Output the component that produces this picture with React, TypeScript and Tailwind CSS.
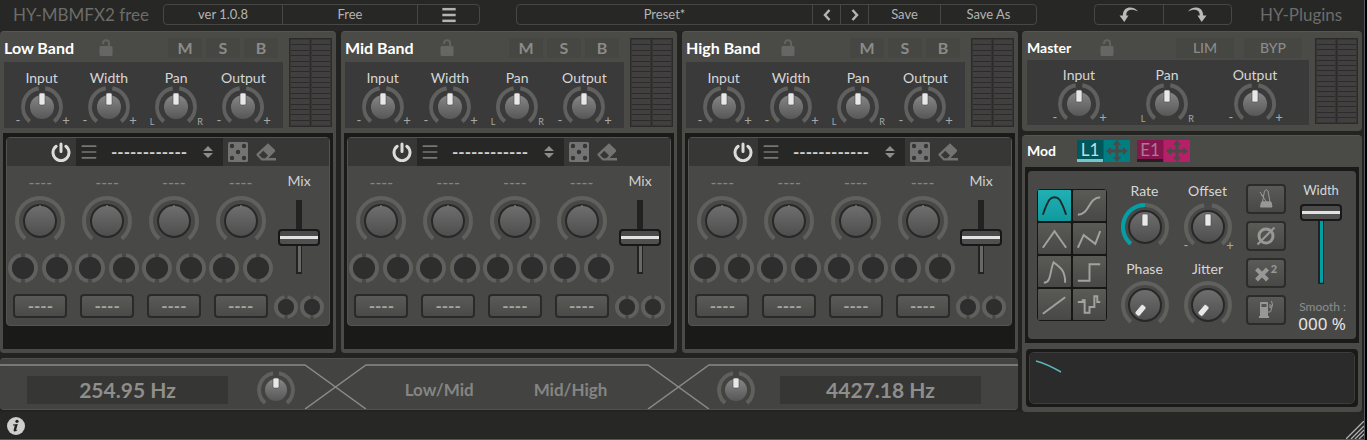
import React, { useState } from 'react';
import { Menu } from 'lucide-react';

type Variant = 'trim' | 'macro' | 'mod' | 'cross';

// radius of the ring, radius of the cap, pointer length
const KNOBS: Record<Variant, { size: number; ring: number; cap: number; pointer: number; top: number }> = {
  trim: { size: 42, ring: 19, cap: 12, pointer: 12, top: 14 },
  macro: { size: 50, ring: 23, cap: 16, pointer: 0, top: 0 },
  mod: { size: 48, ring: 22, cap: 16, pointer: 12, top: 13 },
  cross: { size: 36, ring: 17, cap: 11, pointer: 10, top: 12 },
};

const SWEEP = 140;

const point = (r: number, deg: number) => {
  const a = ((deg - 90) * Math.PI) / 180;
  return `${(r * Math.cos(a)).toFixed(2)} ${(r * Math.sin(a)).toFixed(2)}`;
};

const arc = (r: number, from: number, to: number) =>
  `M${point(r, from)}A${r} ${r} 0 ${to - from > 180 ? 1 : 0} 1 ${point(r, to)}`;

interface KnobProps {
  name: string;
  variant: Variant;
  start?: number;
  split?: boolean;
  lit?: boolean;
  marks?: [string, string];
}

const Knob: React.FC<KnobProps> = ({ name, variant, start = 50, split = false, lit = false, marks }) => {
  const [value, setValue] = useState(start);
  const { size, ring, cap, pointer, top } = KNOBS[variant];
  const half = size / 2;
  const angle = (value / 100) * SWEEP * 2 - SWEEP;
  const outlined = variant === 'macro' || variant === 'mod';
  const markX = variant === 'mod' ? 22 : 24;
  const markY = variant === 'mod' ? 23 : 18;

  return (
    <span className="relative block">
      <svg width={size} height={size} viewBox={`${-half} ${-half} ${size} ${size}`} className="block overflow-visible">
        <defs>
          <linearGradient id="cap" x1="0" y1="0" x2="0" y2="1">
            <stop offset="0" stopColor="#868686" />
            <stop offset="1" stopColor="#575757" />
          </linearGradient>
          <linearGradient id="capDim" x1="0" y1="0" x2="0" y2="1">
            <stop offset="0" stopColor="#6f6f6f" />
            <stop offset="1" stopColor="#4d4d4d" />
          </linearGradient>
        </defs>
        <g fill="none" stroke="#60605e" strokeWidth="4">
          {split ? (
            <>
              <path d={arc(ring, -SWEEP, -10)} />
              <path d={arc(ring, 10, SWEEP)} />
            </>
          ) : (
            <path d={arc(ring, -SWEEP, SWEEP)} />
          )}
          {lit && value > 0 && <path d={arc(ring, -SWEEP, angle)} stroke="#00a0a6" />}
        </g>
        <circle
          r={cap}
          fill={outlined ? 'url(#capDim)' : 'url(#cap)'}
          stroke={outlined ? '#282828' : 'none'}
          strokeWidth="2"
        />
        {pointer > 0 ? (
          <rect
            x="-3"
            y={-top}
            width="6"
            height={pointer}
            rx="1.5"
            fill="#e8e8e8"
            stroke="#4a4a4a"
            strokeWidth="0.6"
            transform={`rotate(${angle})`}
          />
        ) : (
          <path d="M0-16v2" stroke="#777" strokeWidth="1.5" />
        )}
        {marks && (
          <g fill="#a8a8a8" fontSize={marks[0] === 'L' ? 9 : 13} textAnchor="middle">
            <text x={-markX} y={markY}>{marks[0]}</text>
            <text x={markX} y={markY}>{marks[1]}</text>
          </g>
        )}
      </svg>
      <input
        type="range"
        aria-label={name}
        value={value}
        onChange={(e) => setValue(Number(e.target.value))}
        className="absolute inset-0 w-full h-full opacity-0 cursor-pointer"
      />
    </span>
  );
};

// Empty parameter slot
const Slot: React.FC<{ r: number }> = ({ r }) => (
  <svg width={r * 2} height={r * 2} viewBox={`${-r} ${-r} ${r * 2} ${r * 2}`} className="block" aria-hidden="true">
    <g fill="none" stroke="#60605e" strokeWidth="4">
      <path d={arc(r - 2, 9, 171)} />
      <path d={arc(r - 2, 189, 351)} />
    </g>
    <circle r={r - 4} fill="#2e2e2e" />
  </svg>
);

const Meter: React.FC = () => (
  <div className="grid grid-cols-2 gap-px w-[43px] shrink-0 p-px bg-[#2b2b2a]">
    {[0, 1].map((ch) => (
      <div key={ch} className="flex flex-col gap-px border border-[#363634]">
        {Array.from({ length: 16 }, (_, i) => (
          <span key={i} className="flex-1 bg-[#413f3f]" />
        ))}
      </div>
    ))}
  </div>
);

const LockIcon: React.FC = () => (
  <svg width="14" height="18" viewBox="0 0 14 18" className="block">
    <rect x="0.5" y="7" width="13" height="10" rx="1.5" fill="#666665" />
    <path d="M10 8V4.500a3 3 0 0 0-6-.5v1" fill="none" stroke="#626261" strokeWidth="2" />
  </svg>
);

const PowerIcon: React.FC = () => (
  <svg width="20" height="20" viewBox="0 0 20 20" fill="none" stroke="#dcdcdc" strokeWidth="3" strokeLinecap="round">
    <path d="M10 2v7.500M5.200 4.300a8 8 0 1 0 9.600 0" />
  </svg>
);

const DiceIcon: React.FC = () => (
  <svg width="20" height="20" viewBox="0 0 20 20">
    <rect width="20" height="20" rx="1.5" fill="#737373" />
    <g fill="#353534">
      <circle cx="4" cy="4" r="2.200" />
      <circle cx="16" cy="4" r="2.200" />
      <circle cx="10" cy="10" r="2.200" />
      <circle cx="4" cy="16" r="2.200" />
      <circle cx="16" cy="16" r="2.200" />
    </g>
  </svg>
);

const EraserIcon: React.FC = () => (
  <svg width="20" height="20" viewBox="0 0 20 20">
    <path
      fill="#737373"
      fillRule="evenodd"
      d="M12 1.200 18.800 7.800Q19.600 8.800 18.800 9.800L12.500 16H20V18.500H5.500L.700 13.500Q0 12.500.700 11.700ZM7.300 8.800 3 13l3.300 3.300H9.300L12 13.500Z"
    />
  </svg>
);

const UndoIcon: React.FC = () => (
  <svg width="20" height="16" viewBox="0 0 20 16">
    <path fill="#bababa" d="M19 4.500C15-1 4-1.500 3.800 8.500H.5L5.300 15 9.500 8.500H7.300C7 2.500 13 1.500 19 4.500Z" />
  </svg>
);

const RANGE =
  'appearance-none w-[42px] bg-no-repeat bg-center cursor-pointer [writing-mode:vertical-lr] [direction:rtl] [&::-webkit-slider-runnable-track]:w-[42px] [&::-webkit-slider-thumb]:appearance-none [&::-webkit-slider-thumb]:w-[42px] [&::-webkit-slider-thumb]:h-[17px] [&::-webkit-slider-thumb]:rounded-[4px] [&::-webkit-slider-thumb]:border-2 [&::-webkit-slider-thumb]:border-solid [&::-webkit-slider-thumb]:border-[#181818] [&::-webkit-slider-thumb]:bg-[linear-gradient(#4a4a4a_0_40%,#e2e2e2_40%_63%,#505050_63%_100%)]';

const BAND_KNOBS = ['Input', 'Width', 'Pan', 'Output'];

const TrimKnob: React.FC<{ band: string; name: string }> = ({ band, name }) => (
  <div className="flex flex-col items-center">
    <span className="text-sm leading-4 text-[#d6d6d6]">{name}</span>
    <Knob name={`${band} ${name}`} variant="trim" split marks={name === 'Pan' ? ['L', 'R'] : ['-', '+']} />
  </div>
);

const Band: React.FC<{ title: string }> = ({ title }) => (
  <section className="flex flex-col gap-[6px] px-[3px] pt-[6px] pb-1 rounded bg-[#4a4a46] border-t border-[#555552]">
    <div className="flex justify-between gap-[6px] px-px">
      <div className="flex-1 h-[89px] flex flex-col">
        <div className="flex items-center h-6 pb-1">
          <h2 className="w-[95px] text-base leading-5 font-bold text-white">{title}</h2>
          <button aria-label={`Unlock ${title}`}><LockIcon /></button>
          <div className="flex gap-1 ml-auto mr-[5px]">
            {['M', 'S', 'B'].map((key) => (
              <button key={key} className="w-[34px] h-5 text-base leading-5 font-bold text-[#8b8b89] bg-[#464643]">
                {key}
              </button>
            ))}
          </div>
        </div>
        <div className="flex-1 grid grid-cols-4 pl-1 pr-[6px] pt-2 bg-[#3a3a3a]">
          {BAND_KNOBS.map((name) => (
            <TrimKnob key={name} band={title} name={name} />
          ))}
        </div>
      </div>
      <Meter />
    </div>

    <div className="px-[3px] pt-1 pb-[23px] bg-[#1a1a18]">
      <div className="rounded-sm border border-[#545452] bg-[#484846]">
        <div className="flex items-center h-7 bg-[#373736]">
          <button className="w-[69px] flex justify-end pr-[5px]" aria-label={`${title} effect power`}>
            <PowerIcon />
          </button>
          <div className="flex items-center h-full w-[147px] pl-[3px] pr-[10px] bg-[#272726]">
            <button aria-label={`${title} effect menu`}>
              <Menu size={20} color="#777" strokeWidth={2} />
            </button>
            <select
              aria-label={`${title} effect`}
              className="appearance-none flex-1 min-w-0 h-full pl-3 text-[17px] font-bold text-[#d0d0d0] bg-transparent outline-none"
            >
              <option>------------</option>
            </select>
            <svg width="10" height="12" viewBox="0 0 10 12" fill="#8c8c8c" aria-hidden="true">
              <path d="M5 0l5 5H0zM5 12l5-5H0z" />
            </svg>
          </div>
          <div className="flex gap-2 pl-[5px]">
            <button aria-label={`Randomize ${title}`}><DiceIcon /></button>
            <button aria-label={`Clear ${title}`}><EraserIcon /></button>
          </div>
        </div>

        <div className="flex h-[159px]">
          <div className="flex-1 grid grid-cols-4">
            {[1, 2, 3, 4].map((n) => (
              <div key={n} className="flex flex-col items-center">
                <span className="h-[30px] pt-[6px] text-base leading-5 font-medium text-[#858583]">----</span>
                <Knob name={`${title} parameter ${n}`} variant="macro" />
                <div className="flex gap-1 pt-[7px]">
                  <Slot r={15} />
                  <Slot r={15} />
                </div>
                <button className="mt-[11px] w-[54px] h-6 rounded border-2 border-[#2a2a29] bg-linear-to-b from-[#5a5a57] to-[#4a4a48] text-[17px] leading-5 font-bold text-[#a5a5a3]">
                  ----
                </button>
              </div>
            ))}
          </div>
          <div className="w-[55px] flex flex-col items-center pt-[6px] pr-[5px]">
            <label className="flex flex-col items-center gap-[10px] text-sm leading-[18px] text-[#d0d0d0]">
              Mix
              <input
                type="range"
                defaultValue={50}
                className={`${RANGE} h-[74px] bg-[image:linear-gradient(#222_50%,#686868_50%),linear-gradient(#222,#222)] bg-[length:3px_96%,6px_100%]`}
              />
            </label>
            <div className="flex gap-[2px] mt-[21px]">
              <Slot r={12} />
              <Slot r={12} />
            </div>
          </div>
        </div>
      </div>
    </div>
  </section>
);

const Crossover: React.FC = () => (
  <section className="relative h-[52px] rounded overflow-hidden bg-[#434341] border-y border-[#50504e]">
    <svg
      className="absolute inset-0 w-full h-full"
      viewBox="0 0 1018 50"
      preserveAspectRatio="none"
      fill="none"
      stroke="#8a8a88"
      strokeWidth="1.5"
      aria-hidden="true"
    >
      <path d="M0 6H305L366 50M305 50L366 6H648L709 50M648 50L709 6H1018" />
    </svg>
    <div className="relative h-full flex items-center pl-[27px] pr-[37px] pt-4 pb-1">
      <input
        aria-label="Low/Mid frequency"
        defaultValue="254.95 Hz"
        className="w-[201px] h-7 text-center text-[21px] font-bold text-[#8e8e8c] bg-[#363635] outline-none"
      />
      <div className="ml-[30px]"><Knob name="Low/Mid crossover" variant="cross" split /></div>
      <div className="flex-1 flex justify-center gap-[60px] text-[17px] font-bold text-[#858583]">
        <span>Low/Mid</span>
        <span>Mid/High</span>
      </div>
      <div className="mr-[26px]"><Knob name="Mid/High crossover" variant="cross" split /></div>
      <input
        aria-label="Mid/High frequency"
        defaultValue="4427.18 Hz"
        className="w-[201px] h-7 text-center text-[21px] font-bold text-[#8e8e8c] bg-[#363635] outline-none"
      />
    </div>
  </section>
);

const Master: React.FC = () => (
  <section className="flex gap-[6px] pl-[5px] pr-1 pt-[6px] pb-[7px] rounded bg-[#4a4a46] border-t border-[#555552]">
    <div className="flex-1 h-[86px] flex flex-col">
      <div className="flex items-center h-[22px] pb-[2px]">
        <h2 className="w-[73px] text-sm leading-5 font-bold text-white">Master</h2>
        <button aria-label="Unlock Master"><LockIcon /></button>
        <div className="flex gap-[10px] ml-auto mr-[7px]">
          {['LIM', 'BYP'].map((key) => (
            <button key={key} className="w-[58px] h-5 text-sm leading-5 font-medium text-[#8b8b89] bg-[#464643]">
              {key}
            </button>
          ))}
        </div>
      </div>
      <div className="flex-1 grid grid-cols-3 pl-2 pr-[10px] pt-[7px] bg-[#3a3a3a]">
        {['Input', 'Pan', 'Output'].map((name) => (
          <TrimKnob key={name} band="Master" name={name} />
        ))}
      </div>
    </div>
    <Meter />
  </section>
);

const WAVES = [
  { name: 'Sine', d: 'M5 25C11 8 13 7 17 7s6 1 12 18' },
  { name: 'S-curve', d: 'M5 25C18 24 15 8 28 7' },
  { name: 'Triangle', d: 'M5 25 17 8 29 25' },
  { name: 'Zigzag', d: 'M5 25 11 12 23 21 28 8' },
  { name: 'Fin', d: 'M6 27C14 27 12 15 16 6C24 12 28 15 28 27' },
  { name: 'Square', d: 'M5 25H17V8H28' },
  { name: 'Ramp', d: 'M5 25 28 8' },
  { name: 'Random', d: 'M5 13H10V11H12V24H17V18H22V7H25V13H28' },
];

// Double headed cross used as the drag handle of a modulator
const DragIcon: React.FC = () => (
  <svg width="22" height="22" viewBox="0 0 22 22" fill="#4a4a47">
    <path d="M11 0l4 5h-2.500v4.500h4.500V7l5 4-5 4v-2.500h-4.500V17H15l-4 5-4-5h2.500v-4.500H5V15l-5-4 5-4v2.500h4.500V5H7z" />
  </svg>
);

const MetronomeIcon: React.FC = () => (
  <svg width="14" height="20" viewBox="0 0 14 20" fill="none" stroke="#989896" strokeWidth="1">
    <path d="M3.500 13 5.500 2Q7.500-.5 9 2L11 13M7.500 13 1 3M2 6l3 1" />
    <path d="M2.500 13h9.500l1 5H1.500zM4 13h7v2.500H4z" fill="#989896" />
  </svg>
);

const PumpIcon: React.FC = () => (
  <svg width="16" height="20" viewBox="0 0 16 20" fill="none" stroke="#989896">
    <path fillRule="evenodd" stroke="none" fill="#989896" d="M2 3Q2 2 3 2h6q1 0 1 1v13h1v2H1v-2h1zM3.500 4v3h5V4z" />
    <path d="M10 12h2q1 0 1-2l1.500-5L13.500 1M12 4v4l2-3" />
  </svg>
);

const MOD_BUTTONS = [
  { name: 'Tempo sync', icon: <MetronomeIcon /> },
  {
    name: 'Invert phase',
    icon: (
      <svg width="20" height="20" viewBox="0 0 20 20" fill="none" stroke="#989896" strokeWidth="3">
        <circle cx="10" cy="10" r="7" />
        <path d="M1.500 18.500 18.500 1.500" strokeWidth="2" />
      </svg>
    ),
  },
  {
    name: 'Square',
    icon: (
      <span className="flex text-[#989896]">
        <svg width="14" height="20" viewBox="0 0 14 20" fill="none" stroke="currentColor" strokeWidth="4">
          <path d="M1.500 6l11 11M12.500 6l-11 11" />
        </svg>
        <span className="pl-[2px] text-[11px] leading-3 font-black">2</span>
      </span>
    ),
  },
  { name: 'Rate boost', icon: <PumpIcon /> },
];

const ModKnob: React.FC<Omit<KnobProps, 'variant'>> = (props) => (
  <div className="flex flex-col items-center w-[63px]">
    <span className="text-sm leading-[18px] mb-[3px] text-[#d6d6d6]">{props.name}</span>
    <Knob variant="mod" {...props} />
  </div>
);

const KEY = 'flex items-center justify-center bg-linear-to-b from-[#5a5a57] to-[#484846]';

const Mod: React.FC = () => {
  const [wave, setWave] = useState(0);

  return (
    <section className="px-[3px] pt-1 pb-[5px] rounded bg-[#4a4a46] border-t border-[#555552]">
      <div className="flex items-center h-[27px] pb-[5px] pl-[2px]">
        <h2 className="w-[50px] text-sm leading-5 font-bold text-white">Mod</h2>
        <div className="flex gap-px">
          <button className="w-[26px] h-[22px] text-[17px] leading-[18px] text-[#c5dcdc] bg-[#00585c] border-b-[3px] border-[#72c8cc]">
            L1
          </button>
          <button aria-label="Drag L1" className="w-[26px] h-[22px] flex items-center justify-center bg-[#007e82]">
            <DragIcon />
          </button>
        </div>
        <div className="flex gap-px ml-[7px]">
          <button className="w-[26px] h-[22px] text-[17px] leading-[18px] text-[#aa7a94] bg-[#86164f] border-b-[3px] border-[#2b1b23]">
            E1
          </button>
          <button aria-label="Drag E1" className="w-[26px] h-[22px] flex items-center justify-center bg-[#b52069]">
            <DragIcon />
          </button>
        </div>
      </div>

      <div className="px-[3px] py-1 bg-[#1a1a18]">
        <div className="flex h-[168px] pl-[9px] pr-[10px] rounded bg-[#484846]">
          <div className="mt-[18px] grid grid-cols-2 gap-[2px] w-[70px] h-[132px] p-px rounded bg-[#171716]">
            {WAVES.map((w, i) => (
              <button
                key={w.name}
                aria-label={w.name}
                aria-pressed={wave === i}
                onClick={() => setWave(i)}
                className={`${wave === i ? 'flex items-center justify-center bg-linear-to-b from-[#20b0b4] to-[#109a9e]' : KEY} rounded-[1px]`}
              >
                <svg
                  width="34"
                  height="31"
                  viewBox="0 0 34 31"
                  fill="none"
                  stroke={wave === i ? '#1c2a2a' : '#a2a29f'}
                  strokeWidth="2"
                >
                  <path d={w.d} />
                </svg>
              </button>
            ))}
          </div>

          <div className="grid grid-cols-2 gap-y-[9px] content-start ml-[6px] mt-[11px]">
            <ModKnob name="Rate" lit />
            <ModKnob name="Offset" split marks={['-', '+']} />
            <ModKnob name="Phase" start={0} />
            <ModKnob name="Jitter" start={0} />
          </div>

          <div className="flex flex-col gap-[7px] ml-[7px] mt-[13px]">
            {MOD_BUTTONS.map((b) => (
              <button key={b.name} aria-label={b.name} className={`${KEY} w-10 h-[30px] rounded border-2 border-[#2c2c2b]`}>
                {b.icon}
              </button>
            ))}
          </div>

          <div className="flex-1 flex flex-col items-end pt-[10px]">
            <label className="flex flex-col items-center gap-[5px] mr-[4px] text-[13px] leading-[18px] text-[#d6d6d6]">
              Width
              <input
                type="range"
                defaultValue={100}
                className={`${RANGE} h-[80px] bg-[image:linear-gradient(#00a0a6,#00a0a6),linear-gradient(#222,#222)] bg-[length:3px_96%,6px_100%]`}
              />
            </label>
            <span className="mt-[14px] text-xs leading-[18px] text-[#8e8e8c]">Smooth :</span>
            <output className="text-[17px] leading-[16px] text-[#e4e4e4] font-['Noto_Sans',sans-serif]">000 %</output>
          </div>
        </div>
      </div>

      <div className="mt-[6px] mx-px p-1 rounded bg-[#1a1a18]">
        <svg className="block w-full h-[50px] rounded bg-[#2b2b2b] outline outline-[#3d3d3c]" aria-label="Modulator output">
          <path d="M6 8Q17 11 31 19" fill="none" stroke="#5ab5b9" strokeWidth="1.5" />
        </svg>
      </div>
    </section>
  );
};

const CELL = 'flex items-center justify-center h-full text-[13px] text-[#b4b4b2]';
const BAR = 'flex h-[21px] rounded border border-[#474745] divide-x divide-[#474745]';

const Toolbar: React.FC = () => (
  <header className="flex items-center h-[31px] pb-[2px]">
    <h1 className="w-[163px] pl-[13px] text-[17px] leading-6 text-[#6c6c6a]">HY-MBMFX2 free</h1>
    <div className={`${BAR} w-[317px]`}>
      <span className={`${CELL} w-[119px]`}>ver 1.0.8</span>
      <button className={`${CELL} w-[135px]`}>Free</button>
      <button className={`${CELL} flex-1`} aria-label="Menu">
        <Menu size={20} strokeWidth={3} strokeLinecap="butt" />
      </button>
    </div>
    <div className={`${BAR} flex-1 ml-9`}>
      <button className={`${CELL} flex-1`}>Preset*</button>
      <button className={`${CELL} w-7`} aria-label="Previous preset">
        <svg width="8" height="12" viewBox="0 0 8 12" fill="none" stroke="currentColor" strokeWidth="2.500"><path d="M6.500 1 2 6l4.500 5" /></svg>
      </button>
      <button className={`${CELL} w-7`} aria-label="Next preset">
        <svg width="8" height="12" viewBox="0 0 8 12" fill="none" stroke="currentColor" strokeWidth="2.500"><path d="M1.500 1 6 6l-4.500 5" /></svg>
      </button>
      <button className={`${CELL} w-[72px]`}>Save</button>
      <button className={`${CELL} w-[95px]`}>Save As</button>
    </div>
    <div className={`${BAR} w-[138px] ml-[57px]`}>
      <button className={`${CELL} flex-1`} aria-label="Undo"><UndoIcon /></button>
      <button className={`${CELL} flex-1`} aria-label="Redo"><span className="-scale-x-100"><UndoIcon /></span></button>
    </div>
    <span className="w-[132px] pl-7 text-[17px] leading-6 whitespace-nowrap text-[#6c6c6a]">HY-Plugins</span>
  </header>
);

const App: React.FC = () => (
  <div className="min-h-screen bg-black pr-[2px] font-['Lato',sans-serif]">
    <div className="min-h-screen flex flex-col bg-[#272725] border-r border-b border-[#55555c]">
      <Toolbar />
      <main className="grid grid-cols-[minmax(0,1fr)_340px] gap-1 pr-[2px] bg-[#232321]">
        <div className="flex flex-col gap-[5px]">
          <div className="grid grid-cols-3 gap-[5px]">
            <Band title="Low Band" />
            <Band title="Mid Band" />
            <Band title="High Band" />
          </div>
          <Crossover />
        </div>
        <div className="flex flex-col gap-1">
          <Master />
          <Mod />
        </div>
      </main>
      <footer className="flex-1 flex items-center justify-between pl-[7px]">
        <button aria-label="About">
          <svg width="18" height="18" viewBox="0 0 18 18">
            <circle cx="9" cy="9" r="9" fill="#cfcfcf" />
            <circle cx="10" cy="4.300" r="1.600" fill="#222" />
            <path d="M6 7.500 10.800 7 9.200 12.800Q9.200 13.500 11 12.200 9.500 14.500 7.500 14.500 6.200 14.300 6.700 12.500L7.800 8.500H6Z" fill="#222" />
          </svg>
        </button>
        <svg width="18" height="18" viewBox="0 0 18 18" className="self-end" stroke="#b0b0b0" strokeWidth="1.300" aria-hidden="true">
          <path d="M0 18 18 0M5 18 18 5M9 18 18 9M13 18 18 13" />
        </svg>
      </footer>
    </div>
  </div>
);

export default App;
